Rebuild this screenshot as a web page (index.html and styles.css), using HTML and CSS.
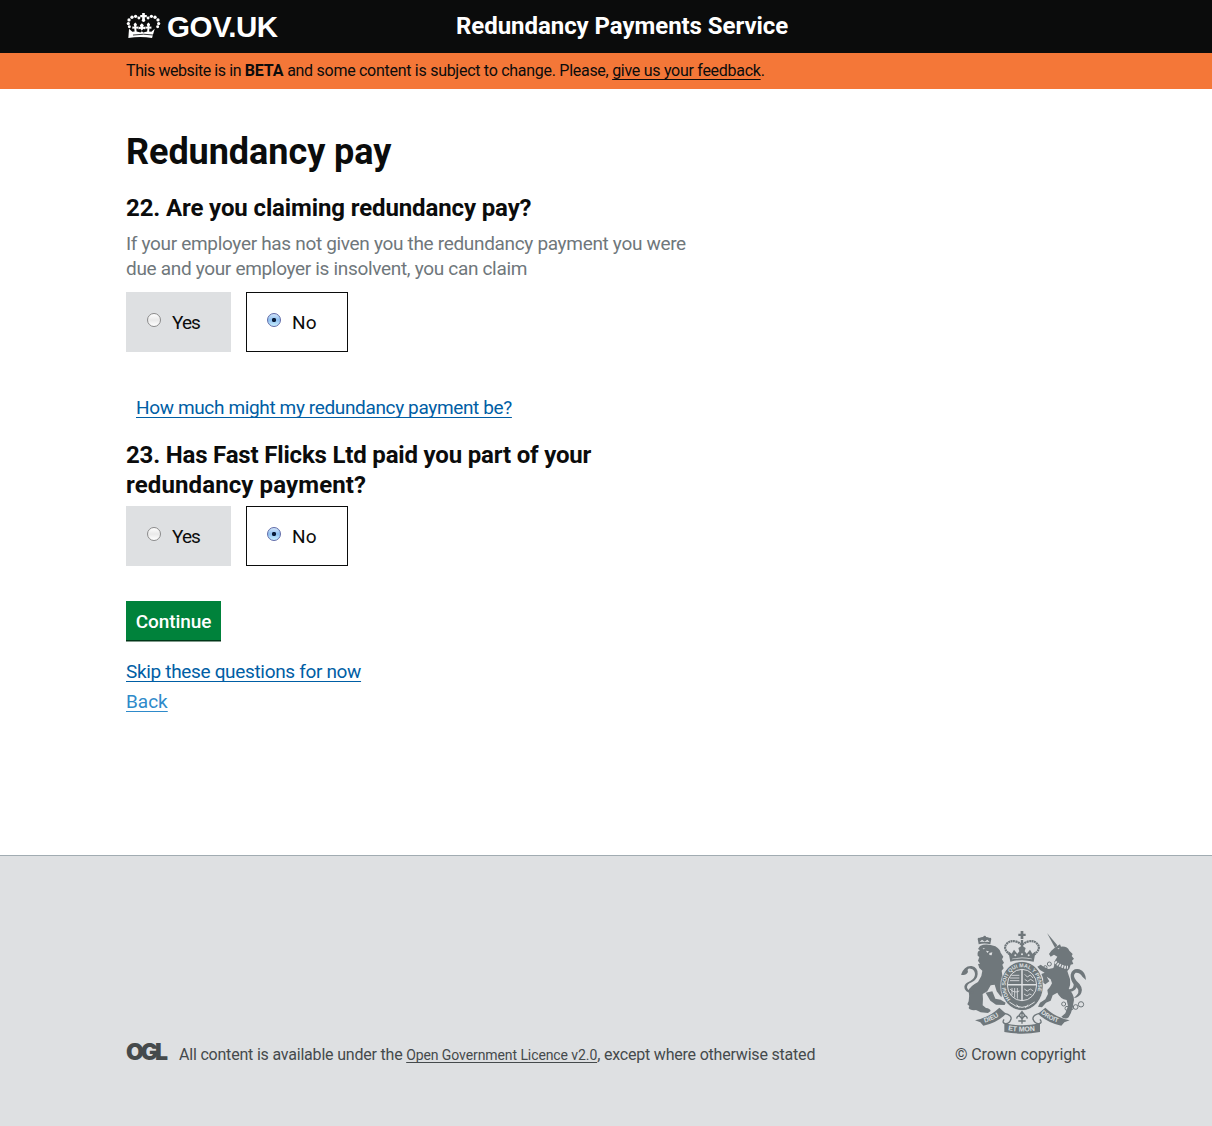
FILE: index.html
```html
<!DOCTYPE html>
<html lang="en">
<head>
<meta charset="utf-8">
<title>Redundancy Payments Service</title>
<link rel="stylesheet" href="styles.css">
</head>
<body>
<header class="header">
  <div class="wrap header-row">
    <a class="logo" href="#">
      <svg class="crown" viewBox="48 36 106 82" aria-hidden="true">
        <g fill="#fff">
          <path d="M97 39h8v6h6v7h-6v7h-8v-7h-6v-7h6z"/>
          <circle cx="101" cy="61" r="5"/>
          <circle cx="87" cy="54" r="4.5"/><circle cx="77" cy="49" r="5"/><circle cx="66" cy="52" r="5"/><circle cx="57" cy="60" r="5"/><circle cx="55" cy="71" r="5"/><circle cx="58" cy="81" r="4.5"/>
          <circle cx="115" cy="54" r="4.5"/><circle cx="125" cy="49" r="5"/><circle cx="136" cy="52" r="5"/><circle cx="145" cy="60" r="5"/><circle cx="147" cy="71" r="5"/><circle cx="144" cy="81" r="4.5"/>
          <path d="M57 87l10 9 7-1-1-9-6 1v-7l6 1-2-8 5-5 5 5-2 8 6-1v7l-6-1 1 9 12 3 5-5-6-6-5 2v-9l6 2-2-6 6-6 6 6-2 6 6-2v9l-5-2-6 6 5 5 12-3 1-9-6 1v-7l6 1-2-8 5-5 5 5-2 8 6-1v7l-6-1-1 9 7 1 10-9-8 28q-36-6-72 0z"/>
        </g>
        <path d="M69 106q32-5 64 0" fill="none" stroke="#0b0c0c" stroke-width="2.5"/>
      </svg>
      <span class="logo-text">GOV.UK</span>
    </a>
    <span class="service">Redundancy Payments Service</span>
  </div>
</header>
<div class="beta">
  <p class="wrap beta-text"><span class="beta-lead">This website is in </span><b>BETA</b> and some content is subject to change. Please, <a href="#">give us your feedback</a>.</p>
</div>
<main class="wrap main">
  <h1>Redundancy pay</h1>
  <section class="question">
    <h2>22. Are you claiming redundancy pay?</h2>
    <p class="hint">If your employer has not given you the redundancy payment you were<br>due and your employer is insolvent, you can claim</p>
    <div class="options">
      <label class="option"><span class="radio"></span>Yes</label>
      <label class="option selected"><span class="radio"></span>No</label>
    </div>
    <p class="help"><a href="#">How much might my redundancy payment be?</a></p>
  </section>
  <section class="question">
    <h2><span class="tight">23. Has Fast Flicks Ltd paid you part of your</span><br><span class="loose">redundancy payment?</span></h2>
    <div class="options second">
      <label class="option"><span class="radio"></span>Yes</label>
      <label class="option selected"><span class="radio"></span>No</label>
    </div>
  </section>
  <button class="continue" type="button">Continue</button>
  <nav class="links">
    <a href="#">Skip these questions for now</a>
    <a class="back" href="#">Back</a>
  </nav>
</main>
<footer class="footer">
  <div class="wrap footer-row">
    <div class="licence">
      <span class="ogl">OGL</span>
      <p>All content is available under the <a href="#">Open Government Licence v2.0</a>, except where otherwise stated</p>
    </div>
    <div class="copyright">
      <svg class="arms" viewBox="33 33 375 309" aria-hidden="true">
        <defs>
          <path id="garter" d="M182 238A49 56 0 1 1 250 238"/>
          <path id="dieu" d="M104 308Q138 299 160 277"/>
          <path id="motto" d="M174 331Q216 338 262 331"/>
          <path id="droit" d="M272 279Q298 303 334 309"/>
        </defs>
        <!-- lion -->
        <g fill="#6f777b">
          <path d="M86 73l-3-17q20-12 41 0l-3 17q-17-5-35 0z"/>
          <circle cx="104" cy="51" r="4"/><circle cx="87" cy="57" r="3.5"/><circle cx="120" cy="57" r="3.5"/>
          <path d="M90 78Q104 71 122 75L136 79Q150 87 152 98L160 110 156 118 162 128 157 134 161 145 155 152 157 166Q166 172 164 184L158 178 154 184 162 196 158 206Q168 212 168 222L158 218 154 232 140 214 134 194 122 196 112 214 98 222Q100 238 98 256L108 264Q120 265 122 273L114 279 92 277 78 270Q60 272 56 264L58 258 52 253 56 244Q59 228 56 212 58 200 84 186L94 168 97 152 88 144 84 132 90 131 84 122 88 111 83 107Q81 94 90 91L84 87Z"/>
          <path d="M70 221Q42 216 43 200Q44 190 61 183Q75 175 75 162Q74 148 62 146Q50 144 54 156Q48 168 33 164Q43 136 65 138Q84 142 83 162Q82 178 65 187Q50 193 51 203Q54 212 72 216z"/>
          <path d="M107 218l20-4 9 22 16 3 15 9-3 7-26-1-17-12z"/>
        </g>
        <!-- crown -->
        <path fill="#6f777b" d="M212 33h8v8h7v7h-7v9h-8v-9h-7v-7h7z"/>
        <g fill="none" stroke="#6f777b">
          <path d="M180 104Q158 87 169 73Q181 58 203 66L216 74L229 66Q251 58 263 73Q274 87 252 104" stroke-width="6.5" stroke-dasharray="6 1.5"/>
          <path d="M216 60v28" stroke-width="7"/>
        </g>
        <!-- crown base, unicorn, garter and scrolls -->
        <g fill="#6f777b">
          <path d="M175 94l10 7 7-12 10 12 6-7-3-10 11-7 11 7-3 10 6 7 10-12 7 12 10-7-6 31q-35-9-70 0z"/>
          <path d="M291 39L322 76L315 83z"/>
          <path d="M316 82L330 73L333 80Q352 78 358 92L368 102 365 108 372 116 366 122 370 132 362 134 358 146 352 153 356 166Q362 178 360 196L356 208Q372 222 372 240L368 262Q364 280 356 292 346 300 334 290L346 280 354 258 350 240Q330 236 322 218L308 226 302 242 288 248 276 262 264 260 270 248 286 238 294 222 292 210Q302 200 306 190L302 178 290 170 298 184 286 193 276 186 280 178 274 162 284 158 270 150 262 140 272 134 282 141 296 147 310 144Q314 136 312 126L322 110 312 104 302 110 297 102 304 92Z"/>
          <path d="M353 207Q372 210 371 193Q361 178 362 164Q367 144 388 148Q407 155 408 180L398 171Q390 157 377 158Q366 166 379 182Q401 201 394 218Q389 231 371 235Q394 217 380 202Q373 218 353 215z"/>
          <ellipse cx="216" cy="198" rx="63" ry="73"/>
          <path d="M75 301Q118 292 148 263L168 281Q142 309 100 317L91 307z"/>
          <path d="M359 301Q316 292 286 263L264 281Q292 309 334 317L343 307z"/>
          <path d="M163 310Q216 322 270 310V336Q216 346 163 336z"/>
        </g>
        <g fill="#dee0e2">
          <path d="M89 66l7-7 8 6 8-6 7 7q-15-3-30 0z"/>
          <circle cx="196" cy="106" r="3"/><circle cx="216" cy="103" r="3"/><circle cx="236" cy="106" r="3"/>
          <path d="M186 116q30-7 60 0l-1 2q-29-6-58 0z"/>
          <path d="M108 92l9 2-5 5zM98 84l8 2-6 2zM118 99l9-2-2 9-7-1z"/>
          <path d="M322 86l7-3-3 5z"/>
        </g>
        <g fill="none" stroke="#dee0e2">
          <ellipse cx="216" cy="198" rx="64" ry="74" stroke-width="2"/>
          <ellipse cx="216" cy="195" rx="44" ry="47" stroke-width="3"/>
          <path d="M216 148v94M173 194h86" stroke-width="4.5"/>
          <path d="M184 166h24M180 174h28M180 182h28M186 204v22M194 204v28M202 204v32M180 207q12 14 28 6M224 163l8 8 9-6 8 9M224 178l9 6 9-6 9 6M223 207l9 6 9-6 9 6M222 222l9 6 8-6 6 3" stroke-width="2.6"/>
          <path d="M178 246Q216 278 254 246M200 254l8 10M226 264l8-10" stroke-width="3"/>
          <path d="M309 120q21 22 45 22" stroke-width="9" stroke-dasharray="5 3"/>
        </g>
        <g fill="none" stroke="#6f777b" stroke-width="3">
          <path d="M164 280Q186 285 183 298Q178 312 166 311Q155 309 162 298M268 280Q247 285 249 298Q255 312 267 311Q278 309 270 298" stroke-width="4"/>
          <path d="M216 275v36M200 296q3-16 16 0q13-16 16 0M208 285l8-10 8 10-8 13zM205 303h22" stroke-width="4"/>
          <circle cx="298" cy="132" r="6"/><circle cx="286" cy="142" r="5"/>
          <circle cx="341" cy="252" r="6"/><circle cx="351" cy="265" r="6"/><circle cx="365" cy="264" r="5"/><circle cx="377" cy="261" r="7"/><circle cx="393" cy="253" r="8"/>
        </g>
        <g class="arms-text">
          <text font-size="16"><textPath href="#garter">HONI SOIT QUI MAL Y PENSE</textPath></text>
          <text font-size="20"><textPath href="#dieu">DIEU</textPath></text>
          <text font-size="21"><textPath href="#motto">ET MON</textPath></text>
          <text font-size="19"><textPath href="#droit">DROIT</textPath></text>
        </g>
      </svg>
      <span>© Crown copyright</span>
    </div>
  </div>
</footer>
</body>
</html>
```
FILE: styles.css
```css
* { box-sizing: border-box; }
body {
  margin: 0;
  min-height: 1126px;
  display: flex;
  flex-direction: column;
  background: #fff;
  color: #0b0c0c;
  font: 19px/25px Roboto, sans-serif;
}
h1, h2, p { margin: 0; }
a {
  color: #005ea5;
  text-decoration: underline 1px;
  text-underline-offset: 3px;
  text-decoration-skip-ink: none;
}
.wrap { width: 960px; margin: 0 auto; }

.header { height: 53px; background: #0b0c0c; color: #fff; }
.header-row { display: flex; height: 53px; align-items: center; }
.logo {
  display: flex;
  width: 330px;
  align-items: center;
  color: #fff;
  text-decoration: none;
}
.crown { width: 35px; height: 27px; margin-bottom: 2px; }
.logo-text {
  margin-left: 6px;
  font: bold 29.5px/30px "Liberation Sans", sans-serif;
  letter-spacing: -0.5px;
}
.service { font-size: 24px; font-weight: 700; letter-spacing: -0.05px; }

.beta { height: 36px; background: #f47738; }
.beta-text { font-size: 16px; line-height: 36px; letter-spacing: -0.28px; }
.beta-lead { letter-spacing: -0.42px; }
.beta b { letter-spacing: -0.1px; }
.beta a { color: #0b0c0c; }

.main { flex: 1; padding-top: 43px; }
h1 { font-size: 36px; line-height: 40px; letter-spacing: -0.05px; }
h2 { font-size: 24px; line-height: 30px; letter-spacing: -0.12px; }
h1 + .question { margin-top: 21px; }
.tight { letter-spacing: -0.18px; }
.loose { letter-spacing: 0.12px; }
.hint { margin-top: 8px; color: #6f777b; letter-spacing: -0.32px; }
.options { display: flex; gap: 15px; margin-top: 11px; }
.options.second { margin-top: 6px; }
.option {
  display: flex;
  width: 105px;
  height: 60px;
  padding: 0 0 0 21px;
  align-items: center;
  background: #dee0e2;
  letter-spacing: -0.9px;
}
.option.selected {
  width: 102px;
  padding-left: 20px;
  border: 1px solid #0b0c0c;
  background: #fff;
  letter-spacing: 0.3px;
}
.radio {
  width: 14px;
  height: 14px;
  margin: -4px 11px 0 0;
  border: 1px solid #8b8b8b;
  border-radius: 50%;
  background: linear-gradient(#fff, #e9e9e9 50%, #fff);
}
.selected .radio {
  border-color: #5f6ba8;
  background:
    radial-gradient(circle, #0a1c38 0 1.8px, transparent 2.5px),
    linear-gradient(#d2e5fa, #8dbff0 50%, #c9f0ff);
}
.help { margin: 43px 0 20px 10px; letter-spacing: -0.36px; }

.continue {
  display: block;
  width: 95px;
  height: 39px;
  margin-top: 35px;
  padding: 2px 0 0;
  border: 0;
  background: #00823b;
  box-shadow: 0 1px 0 #003618, 0 2px 0 #809a8b;
  color: #fff;
  font: 500 19px/25px Roboto, sans-serif;
  letter-spacing: -0.1px;
}
.links {
  display: flex;
  flex-direction: column;
  align-items: flex-start;
  gap: 5px;
  margin-top: 19px;
  letter-spacing: -0.33px;
}
.links .back { color: #2e8aca; letter-spacing: 0; }

.footer {
  height: 271px;
  padding-top: 75px;
  border-top: 1px solid #a1acb2;
  background: #dee0e2;
  color: #454a4c;
  font-size: 16px;
  line-height: 20px;
}
.footer-row { display: flex; justify-content: space-between; align-items: flex-end; }
.licence { display: flex; letter-spacing: -0.2px; }
.licence a { color: #454a4c; font-size: 14px; letter-spacing: -0.09px; text-underline-offset: 2px; }
.ogl {
  width: 53px;
  margin-top: -3px;
  font: 900 23px/20px Inter, sans-serif;
  letter-spacing: -3.1px;
}
.copyright { display: flex; flex-direction: column; align-items: flex-end; letter-spacing: -0.08px; }
.arms { width: 125px; height: 103px; margin-bottom: 11px; }
.arms-text { fill: #dee0e2; font-family: "Liberation Sans", sans-serif; font-weight: 700; }
```
